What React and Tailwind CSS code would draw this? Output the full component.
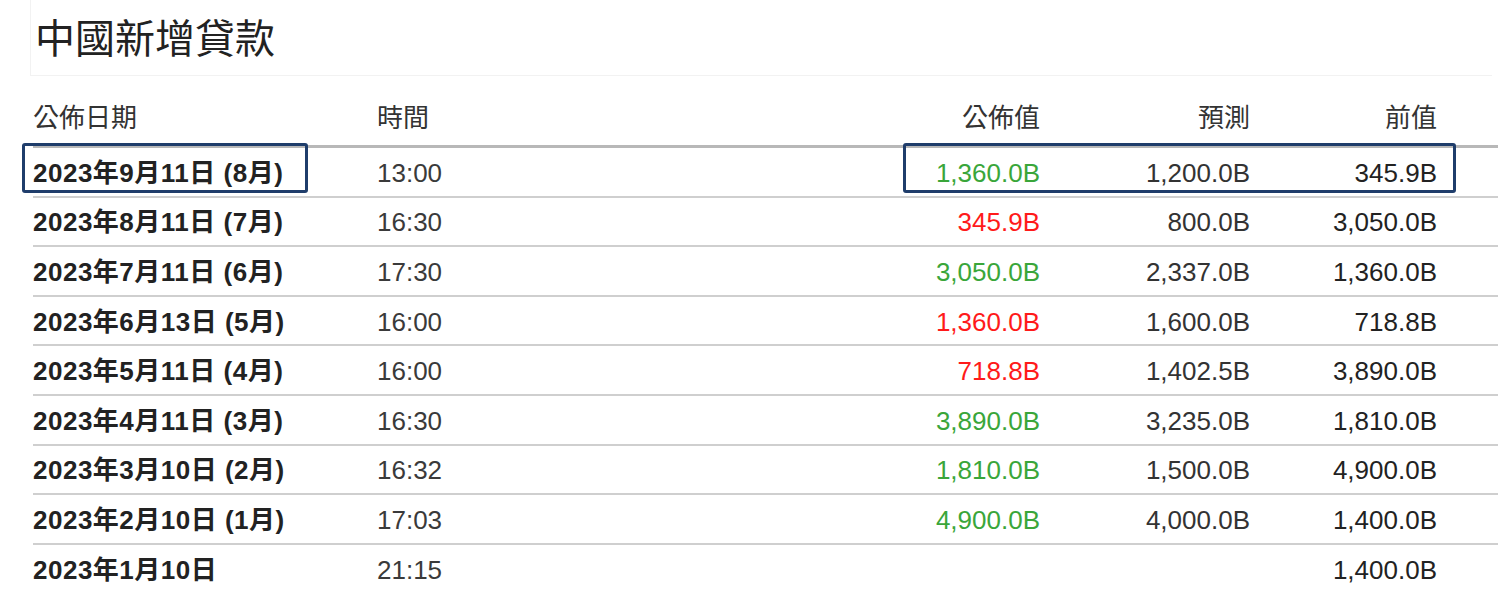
import React from 'react';

const rows = [
  { date: '2023年9月11日 (8月)', time: '13:00', actual: '1,360.0B', tone: 'up', forecast: '1,200.0B', prev: '345.9B' },
  { date: '2023年8月11日 (7月)', time: '16:30', actual: '345.9B', tone: 'down', forecast: '800.0B', prev: '3,050.0B' },
  { date: '2023年7月11日 (6月)', time: '17:30', actual: '3,050.0B', tone: 'up', forecast: '2,337.0B', prev: '1,360.0B' },
  { date: '2023年6月13日 (5月)', time: '16:00', actual: '1,360.0B', tone: 'down', forecast: '1,600.0B', prev: '718.8B' },
  { date: '2023年5月11日 (4月)', time: '16:00', actual: '718.8B', tone: 'down', forecast: '1,402.5B', prev: '3,890.0B' },
  { date: '2023年4月11日 (3月)', time: '16:30', actual: '3,890.0B', tone: 'up', forecast: '3,235.0B', prev: '1,810.0B' },
  { date: '2023年3月10日 (2月)', time: '16:32', actual: '1,810.0B', tone: 'up', forecast: '1,500.0B', prev: '4,900.0B' },
  { date: '2023年2月10日 (1月)', time: '17:03', actual: '4,900.0B', tone: 'up', forecast: '4,000.0B', prev: '1,400.0B' },
  { date: '2023年1月10日', time: '21:15', actual: '', tone: 'up', forecast: '', prev: '1,400.0B' },
];

const cols = 'grid grid-cols-[344px_300px_363px_210px_187px_61px]';

export default function App() {
  return (
    <div className="relative w-[1502px] h-[591px] overflow-hidden bg-white text-[#222] font-['Liberation_Sans','Noto_Sans_CJK_TC',sans-serif]">
      {/* Title */}
      <div className="ml-[30px] w-[1462px] h-[76px] border-l border-b border-[#f2f2f2] flex items-center pl-[4px] pt-[2px]">
        <h1 className="text-[40px] leading-none text-[#222] font-normal">中國新增貸款</h1>
      </div>

      {/* Table */}
      <div className="ml-[33px] w-[1465px]">
        <div className={`${cols} h-[72px] items-end pb-[12px] border-b-[3px] border-[#b8b8b8] text-[26px] leading-[30px] text-[#333]`}>
          <div>公佈日期</div>
          <div>時間</div>
          <div className="text-right">公佈值</div>
          <div className="text-right">預測</div>
          <div className="text-right">前值</div>
          <div />
        </div>
        {rows.map((r, i) => (
          <div
            key={i}
            className={`${cols} h-[49.6px] pt-[2px] items-center border-b-2 text-[26px] leading-[30px] ${i === rows.length - 1 ? 'border-[#f0f0f0]' : 'border-[#cfcfcf]'}`}
          >
            <div className="font-bold text-[#222] tracking-[0.5px]">{r.date}</div>
            <div className="text-[#3a3a3a]">{r.time}</div>
            <div className={`text-right ${r.tone === 'up' ? 'text-[#3aa63a]' : 'text-[#ff1a1a]'}`}>{r.actual}</div>
            <div className="text-right text-[#333]">{r.forecast}</div>
            <div className="text-right text-[#222]">{r.prev}</div>
            <div />
          </div>
        ))}
      </div>

      {/* Highlight boxes */}
      <div className="absolute left-[22px] top-[143px] w-[286px] h-[50px] border-[3px] border-[#1f3d6b] rounded-[3px]" />
      <div className="absolute left-[903px] top-[143px] w-[553px] h-[50px] border-[3px] border-[#1f3d6b] rounded-[3px]" />
    </div>
  );
}
